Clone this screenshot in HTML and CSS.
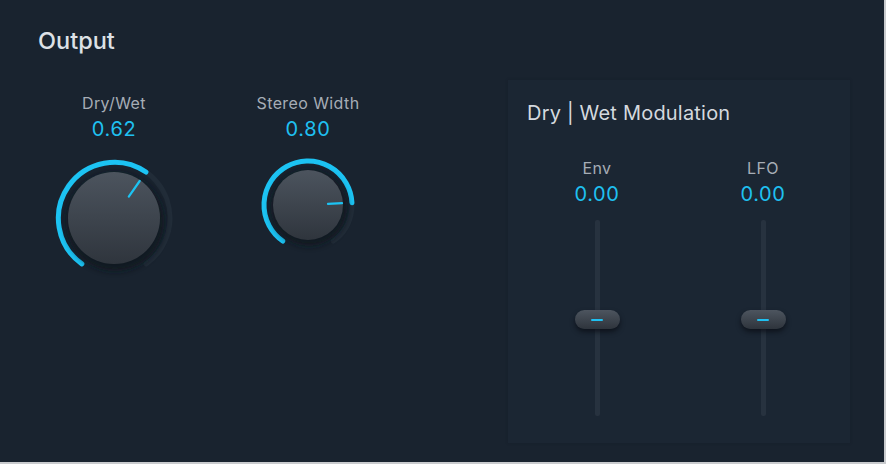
FILE: index.html
```html
<!DOCTYPE html>
<html lang="en">
<head>
    <meta charset="UTF-8">
    <title>Output</title>
    <link rel="stylesheet" href="styles.css">
</head>
<body>
    <div class="screen">
        <div class="output">
            <h1 class="title">Output</h1>
            <div class="knobs">
                <div class="knob_col">
                    <div class="label">Dry/Wet</div>
                    <div class="value">0.62</div>
                    <svg class="knob" width="130" height="130" viewBox="0 0 130 130">
                        <defs>
                            <linearGradient id="cap" x1="0" y1="0" x2="0" y2="1">
                                <stop offset="0" stop-color="#4c545e"/>
                                <stop offset="1" stop-color="#2f353d"/>
                            </linearGradient>
                            <filter id="blur" x="-30%" y="-30%" width="160%" height="160%">
                                <feGaussianBlur stdDeviation="3"/>
                            </filter>
                        </defs>
                        <path d="M32.88 110.87 A56 56 0 1 1 97.12 110.87" fill="none" stroke="#212c38" stroke-width="5" stroke-linecap="round"/>
                        <path d="M32.88 110.87 A56 56 0 0 1 96.96 19.02" fill="none" stroke="#1cc3f3" stroke-width="5" stroke-linecap="round"/>
                        <circle cx="66" cy="69" r="49" fill="#0f161d" opacity="0.75" filter="url(#blur)"/>
                        <circle cx="65" cy="65" r="46" fill="url(#cap)"/>
                        <line x1="79.8" y1="43.6" x2="90.7" y2="28" stroke="#1cc3f3" stroke-width="2.2" stroke-linecap="round"/>
                    </svg>
                </div>
                <div class="knob_col">
                    <div class="label">Stereo Width</div>
                    <div class="value">0.80</div>
                    <svg class="knob" width="104" height="104" viewBox="0 0 104 104">
                        <path d="M26.76 88.04 A44 44 0 1 1 77.24 88.04" fill="none" stroke="#212c38" stroke-width="5" stroke-linecap="round"/>
                        <path d="M26.76 88.04 A44 44 0 1 1 95.94 49.7" fill="none" stroke="#1cc3f3" stroke-width="5" stroke-linecap="round"/>
                        <circle cx="53" cy="55" r="38" fill="#0f161d" opacity="0.75" filter="url(#blur)"/>
                        <circle cx="52" cy="52" r="35" fill="url(#cap)"/>
                        <line x1="72" y1="50.9" x2="86" y2="50.2" stroke="#1cc3f3" stroke-width="2.2" stroke-linecap="round"/>
                    </svg>
                </div>
            </div>
        </div>

        <div class="mod_panel">
            <h2 class="panel_title">Dry | Wet Modulation</h2>
            <div class="sliders">
                <div class="slider_col">
                    <div class="label">Env</div>
                    <div class="value">0.00</div>
                    <div class="track">
                        <div class="thumb"><i></i></div>
                    </div>
                </div>
                <div class="slider_col">
                    <div class="label">LFO</div>
                    <div class="value">0.00</div>
                    <div class="track">
                        <div class="thumb"><i></i></div>
                    </div>
                </div>
            </div>
        </div>
    </div>
</body>
</html>
```

FILE: styles.css
```css
*{
    margin:0;
    padding:0;
    box-sizing:border-box;
}
html,body{
    background:#c9cbce;
}
body{
    width:886px;
    height:464px;
    font-family:Inter,"Open Sans",sans-serif;
}
.screen{
    width:884px;
    height:462px;
    background:#19232f;
    display:flex;
    align-items:flex-start;
}
.output{
    width:470px;
    padding:26px 0 0 38px;
}
.title{
    font-size:23.5px;
    line-height:30px;
    font-weight:500;
    color:#dde1e6;
}
.knobs{
    display:flex;
    gap:54px;
    margin:37px 0 0 6px;
}
.knob_col{
    width:140px;
    display:flex;
    flex-direction:column;
    align-items:center;
}
.label{
    font-size:16px;
    line-height:20px;
    letter-spacing:0.4px;
    color:#a6adb6;
}
.value{
    font-size:20px;
    line-height:24px;
    margin-top:4px;
    color:#1fc0f1;
    letter-spacing:0.6px;
}
.knob{
    display:block;
    margin-top:12px;
}

/* right panel */
.mod_panel{
    width:342px;
    height:363px;
    margin:80px 0 0 38px;
    background:#1b2633;
    box-shadow:0 0 3px rgba(16,24,32,0.25);
    padding:20px 0 0 19px;
}
.panel_title{
    font-size:20px;
    line-height:26px;
    font-weight:400;
    letter-spacing:0.2px;
    color:#d4d9df;
}
.sliders{
    display:flex;
    gap:86px;
    margin:32px 0 0 30px;
}
.slider_col{
    width:80px;
    display:flex;
    flex-direction:column;
    align-items:center;
}
.track{
    position:relative;
    width:5px;
    height:196px;
    margin-top:14px;
    background:#27323f;
    border-radius:2px;
}
.thumb{
    position:absolute;
    left:50%;
    top:90px;
    width:45px;
    height:19px;
    margin-left:-22.5px;
    border-radius:10px;
    background:linear-gradient(#4d555f,#2e343c);
    box-shadow:0 3px 5px rgba(8,12,18,0.7);
    display:flex;
    align-items:center;
    justify-content:center;
}
.thumb i{
    display:block;
    width:12px;
    height:2px;
    background:#1fc0f1;
    border-radius:1px;
}
```
